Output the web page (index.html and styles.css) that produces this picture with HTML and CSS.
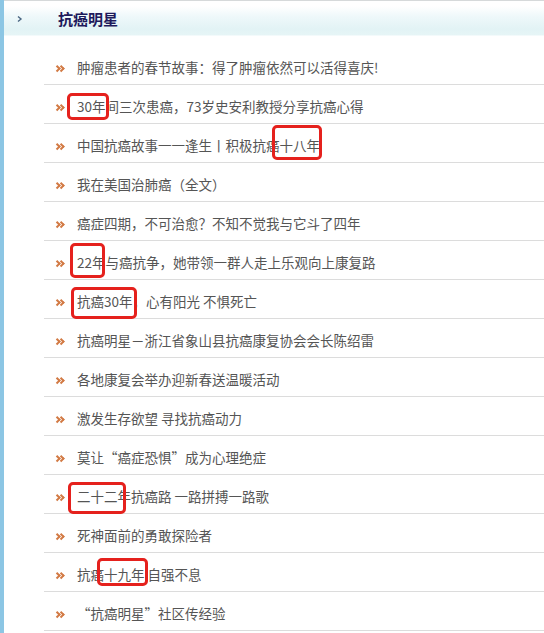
FILE: index.html
```html
<!DOCTYPE html>
<html lang="zh-CN">
<head>
<meta charset="utf-8">
<title>抗癌明星</title>
<link rel="stylesheet" href="styles.css">
</head>
<body>
<div class="page">
  <div class="header">
    <svg class="header-icon" width="6" height="8" viewBox="0 0 6 8"><path d="M1 1.5L4 4L1 6.5" stroke="#4a6682" stroke-width="1.4" fill="none"/></svg>
    <h1 class="title">抗癌明星</h1>
  </div>
  <ul class="list">
    <li class="row"><span class="bullet"></span><span class="text">肿瘤患者的春节故事：得了肿瘤依然可以活得喜庆!</span></li>
    <li class="row"><span class="bullet"></span><span class="text">30年间三次患癌，73岁史安利教授分享抗癌心得</span><span class="mark mark-a"></span></li>
    <li class="row"><span class="bullet"></span><span class="text">中国抗癌故事一一逢生丨积极抗癌十八年</span><span class="mark mark-b"></span></li>
    <li class="row"><span class="bullet"></span><span class="text">我在美国治肺癌（全文）</span></li>
    <li class="row"><span class="bullet"></span><span class="text">癌症四期，不可治愈？不知不觉我与它斗了四年</span></li>
    <li class="row"><span class="bullet"></span><span class="text">22年与癌抗争，她带领一群人走上乐观向上康复路</span><span class="mark mark-c"></span></li>
    <li class="row"><span class="bullet"></span><span class="text">抗癌30年，心有阳光 不惧死亡</span><span class="mark mark-d"></span></li>
    <li class="row"><span class="bullet"></span><span class="text">抗癌明星－浙江省象山县抗癌康复协会会长陈绍雷</span></li>
    <li class="row"><span class="bullet"></span><span class="text">各地康复会举办迎新春送温暖活动</span></li>
    <li class="row"><span class="bullet"></span><span class="text">激发生存欲望 寻找抗癌动力</span></li>
    <li class="row"><span class="bullet"></span><span class="text">莫让“癌症恐惧”成为心理绝症</span></li>
    <li class="row"><span class="bullet"></span><span class="text">二十二年抗癌路 一路拼搏一路歌</span><span class="mark mark-e"></span></li>
    <li class="row"><span class="bullet"></span><span class="text">死神面前的勇敢探险者</span></li>
    <li class="row"><span class="bullet"></span><span class="text">抗癌十九年 自强不息</span><span class="mark mark-f"></span></li>
    <li class="row"><span class="bullet"></span><span class="text">“抗癌明星”社区传经验</span></li>
  </ul>
</div>
</body>
</html>
```

FILE: styles.css
```css
html, body {
  margin: 0;
  padding: 0;
  background: #ffffff;
}

.page {
  width: 544px;
  min-height: 633px;
  box-sizing: border-box;
  border-left: 4px solid #8cc6e4;
  font-family: "Noto Sans CJK SC", "Liberation Sans", sans-serif;
}

.header {
  height: 36px;
  box-sizing: border-box;
  border-top: 1px solid #d6d9da;
  background: linear-gradient(to bottom, #ffffff 0%, #ffffff 15%, #eef8fa 45%, #e2f3f5 80%, #e6f5f6 97%, #ffffff 100%);
  display: flex;
  align-items: center;
  padding-left: 13px;
}

.header-icon {
  display: block;
  margin-top: 1px;
}

.title {
  margin: 0 0 0 35px;
  font-size: 15px;
  line-height: 18px;
  font-weight: bold;
  color: #1e1a5c;
}

.list {
  list-style: none;
  margin: 10px 0 0 40px;
  padding: 0;
}

.row {
  position: relative;
  height: 39px;
  box-sizing: border-box;
  border-bottom: 1px solid #dcdcdc;
  display: flex;
  align-items: flex-start;
  padding-top: 13px;
}

.bullet {
  display: block;
  width: 9px;
  height: 7px;
  margin: 5px 0 0 11px;
  position: relative;
}

.bullet::before,
.bullet::after {
  content: "";
  position: absolute;
  top: 1.5px;
  width: 2.5px;
  height: 2.5px;
  border-top: 2px solid #d27a44;
  border-right: 2px solid #d27a44;
  transform: rotate(45deg);
}

.bullet::before { left: 0; }
.bullet::after { left: 4px; }

.text {
  margin-left: 13px;
  font-size: 13.5px;
  line-height: 16px;
  color: #555555;
  white-space: nowrap;
}

.mark {
  position: absolute;
  box-sizing: border-box;
  border: 3px solid #e5211d;
  border-radius: 5px;
}

.mark-a { left: 23px; top: 8px; width: 42px; height: 27px; }
.mark-b { left: 228px; top: 1px; width: 50px; height: 35px; }
.mark-c { left: 26px; top: 2px; width: 35px; height: 35px; }
.mark-d { left: 27px; top: 7px; width: 66px; height: 32px; }
.mark-e { left: 24px; top: 7px; width: 58px; height: 32px; }
.mark-f { left: 53px; top: 5px; width: 51px; height: 28px; }
```
